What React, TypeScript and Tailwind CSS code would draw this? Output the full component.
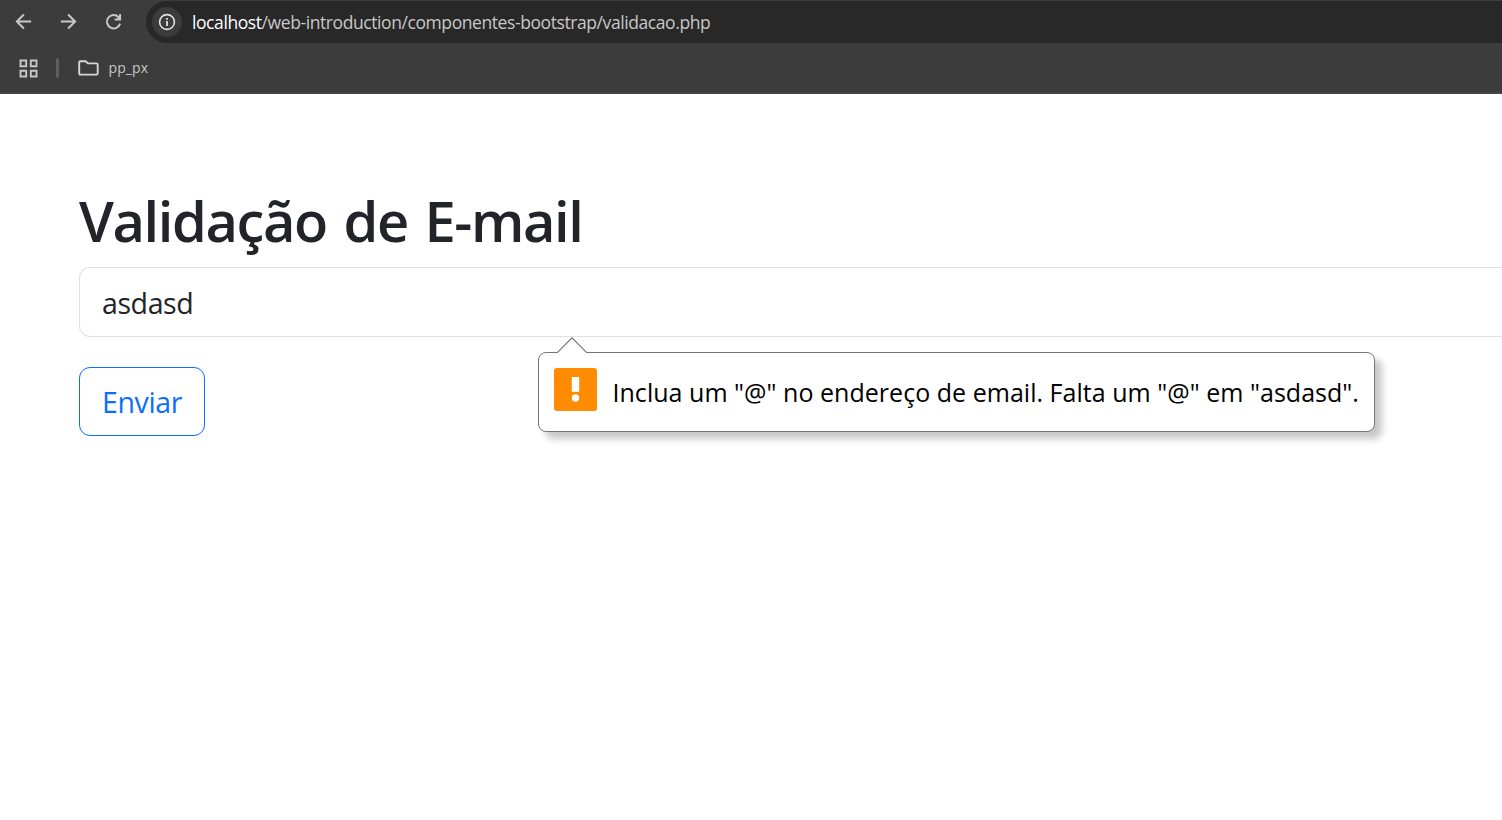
function ArrowIcon({ className }: { className?: string }) {
  return (
    <svg viewBox="0 0 24 24" className={className} fill="none" stroke="currentColor" strokeWidth="2.1">
      <path d="M20 12H5.4M12.4 4.7L5.1 12L12.4 19.3" />
    </svg>
  );
}

function BrowserBar() {
  return (
    <header className="flex h-[94px] flex-col border-b-2 border-[#454545] bg-[#3c3c3c] pt-px text-[#c7c7c7]">
      <div className="flex h-[42px] items-center pl-3">
        <ArrowIcon className="mb-px size-[23px]" />
        <ArrowIcon className="mb-px ml-[22px] size-[23px] rotate-180" />
        <svg viewBox="0 0 24 24" className="mb-px ml-[22px] size-[23px]" fill="none" stroke="currentColor" strokeWidth="2.1">
          <path d="M18.9 14.2A7 7 0 1 1 17.2 7.3L18.4 8.6" />
          <path d="M18.9 4.2V9.9H13.2" />
          <path d="M18.9 6.5V9.9H15Z" fill="currentColor" strokeWidth="0.6" />
        </svg>
        <div className="ml-[21px] flex h-[42px] grow items-center rounded-l-full bg-[#282828] pl-1.5">
          <span className="flex size-[30px] items-center justify-center rounded-full bg-[#3c3c3c] text-[#e3e3e3]">
            <svg viewBox="0 0 18 18" className="size-[18px]" fill="none">
              <circle cx="9" cy="9" r="7.4" stroke="currentColor" strokeWidth="1.6" />
              <path d="M8.1 8h1.8v5H8.1zM8.1 5h1.8v1.8H8.1z" fill="currentColor" />
            </svg>
          </span>
          <span className="mt-0.5 ml-2.5 text-[17.5px] leading-none tracking-[-0.415px] whitespace-nowrap text-[#c7c7c7]">
            <span className="text-white">localhost</span>/web-introduction/componentes-bootstrap/validacao.php
          </span>
        </div>
      </div>
      <div className="flex h-[50px] items-center pl-[19px]">
        <svg viewBox="0 0 19 19" className="mt-px size-[19px]" fill="none" stroke="currentColor" strokeWidth="1.9">
          <path d="M1.5 1.5h5.7v5.7H1.5zM11.8 1.5h5.7v5.7h-5.7zM1.5 11.8h5.7v5.7H1.5zM11.8 11.8h5.7v5.7h-5.7z" />
        </svg>
        <span className="ml-[18px] h-5 w-[3px] rounded-full bg-[#5f5f5f]" />
        <svg viewBox="0 0 21 16" className="mt-px ml-[19px] h-4 w-[21px] text-[#d6d6d6]" fill="none" stroke="currentColor" strokeWidth="1.9" strokeLinejoin="round">
          <path d="M1.2 13.2V2.5Q1.2 1.2 2.5 1.2H7.6L9.8 3.4H18.4Q19.7 3.4 19.7 4.7V13.3Q19.7 14.6 18.4 14.6H2.5Q1.2 14.6 1.2 13.2Z" />
        </svg>
        <span className="ml-[9.5px] text-[14px] leading-none tracking-[0.1px]">pp_px</span>
      </div>
    </header>
  );
}

function ValidationBubble() {
  return (
    <div role="alert" className="absolute top-[85px] left-[459px] flex h-20 w-[837px] items-start rounded-[8px] border border-[#767676] bg-white pl-[15px] text-black shadow-[7px_7px_7px_rgba(0,0,0,0.22)]">
      <svg viewBox="0 0 32 17" className="absolute -top-4 left-[17px] h-[17px] w-8">
        <path d="M1 17V16L16 1L31 16V17Z" fill="white" />
        <path d="M1 15.8L16 .8L31 15.8" fill="none" stroke="#767676" strokeWidth="1.2" />
      </svg>
      <svg viewBox="0 0 43 43" className="mt-[15px] size-[43px] shrink-0">
        <rect width="43" height="43" rx="3" fill="#ff8c00" />
        <rect x="17.8" y="9" width="7.4" height="14.8" fill="white" />
        <circle cx="21.5" cy="30" r="3.7" fill="white" />
      </svg>
      <span className="mt-[22px] ml-[15.5px] text-[25px] leading-[34px] tracking-[0.03px] whitespace-nowrap">
        Inclua um "@" no endereço de email. Falta um "@" em "asdasd".
      </span>
    </div>
  );
}

export default function App() {
  return (
    <div className="h-screen overflow-hidden bg-white font-['Open_Sans','Noto_Sans',sans-serif] text-[#212529]">
      <BrowserBar />
      <main className="pt-[93px] pl-[79px]">
        <h1 className="h-20 text-[56px] leading-[67px] font-semibold tracking-[-1.4px] [word-spacing:3.5px] whitespace-nowrap">Validação de E-mail</h1>
        <form noValidate onSubmit={(e) => e.preventDefault()}>
          <div className="relative">
            <input
              type="email"
              defaultValue="asdasd"
              className="block h-[70px] w-full rounded-l-[11px] border border-r-0 border-[#dee2e6] px-[22px] pt-0.5 text-[28.5px] tracking-[-0.4px] outline-none"
            />
            <ValidationBubble />
          </div>
          <button className="mt-[30px] h-[69px] w-[126px] rounded-[11px] border border-[#0d6efd] pt-0.5 text-[28.5px] tracking-[-0.4px] text-[#0d6efd]">
            Enviar
          </button>
        </form>
      </main>
    </div>
  );
}
